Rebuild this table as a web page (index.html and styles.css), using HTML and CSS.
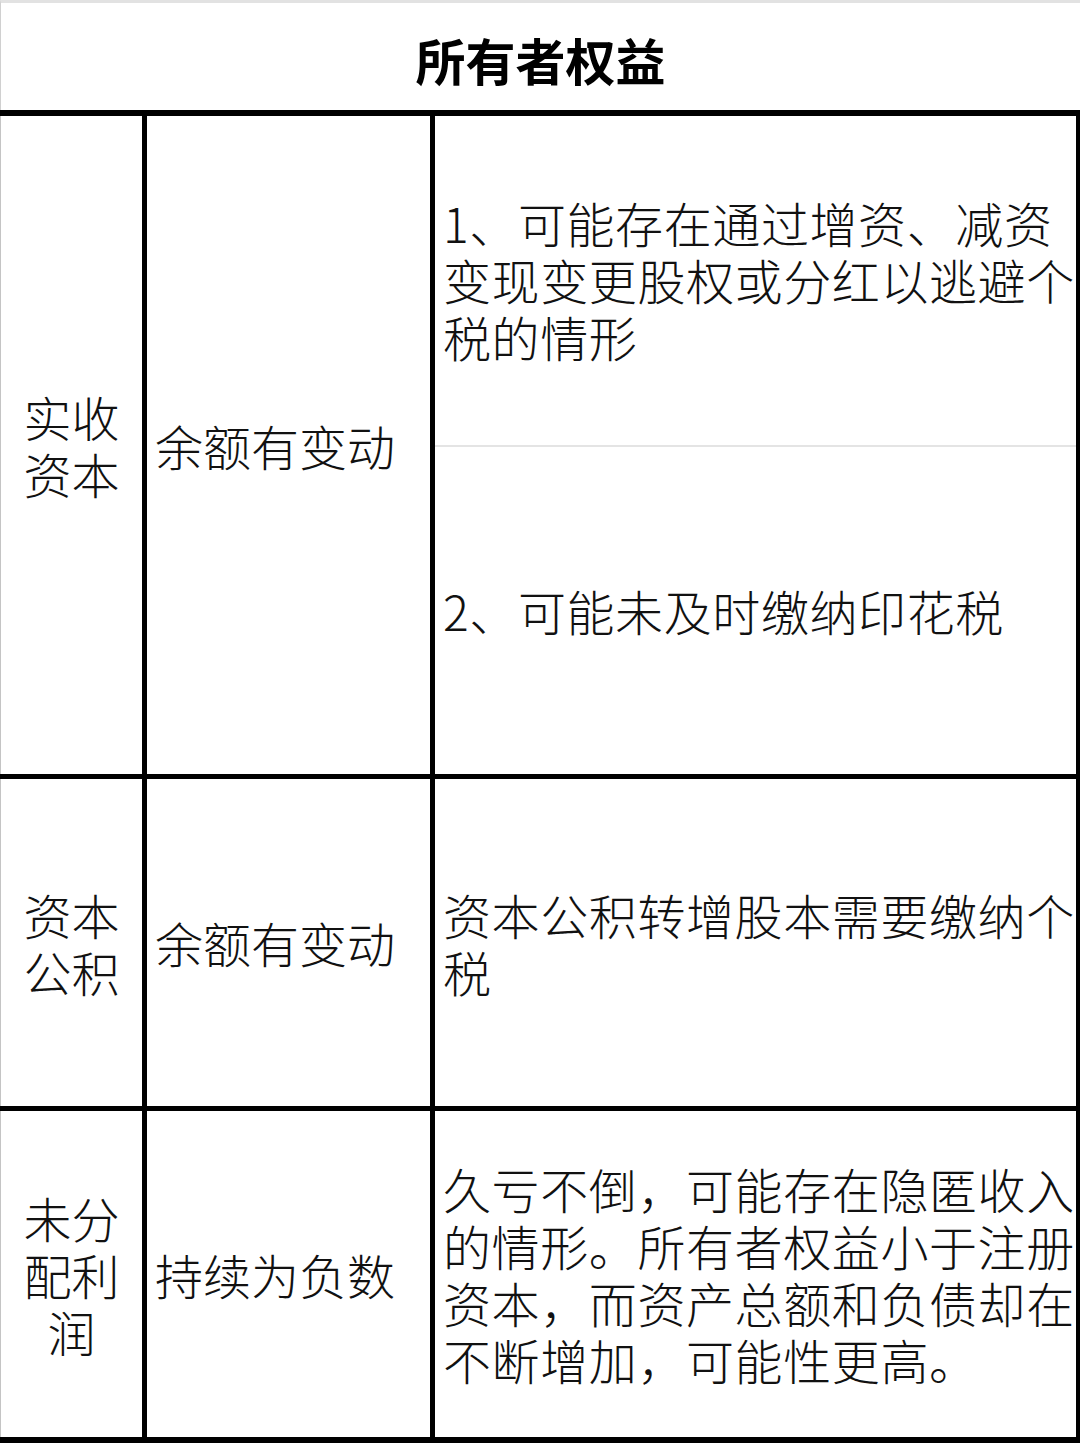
FILE: index.html
```html
<!DOCTYPE html>
<html lang="zh-CN">
<head>
<meta charset="utf-8">
<title>所有者权益</title>
<link rel="stylesheet" href="styles.css">
</head>
<body>
<div class="page">
  <div class="title">所有者权益</div>
  <div class="grid">
    <div class="cell c1"><div class="txt"><span class="ln">实收</span><span class="ln">资本</span></div></div>
    <div class="cell c2">余额有变动</div>
    <div class="split">
      <div class="cell c3 sub top"><div class="txt"><span class="ln">1、可能存在通过增资、减资</span><span class="ln">变现变更股权或分红以逃避个</span><span class="ln">税的情形</span></div></div>
      <div class="cell c3 sub">2、可能未及时缴纳印花税</div>
    </div>

    <div class="cell c1"><div class="txt"><span class="ln">资本</span><span class="ln">公积</span></div></div>
    <div class="cell c2">余额有变动</div>
    <div class="cell c3"><div class="txt"><span class="ln">资本公积转增股本需要缴纳个</span><span class="ln">税</span></div></div>

    <div class="cell c1"><div class="txt"><span class="ln">未分</span><span class="ln">配利</span><span class="ln">润</span></div></div>
    <div class="cell c2">持续为负数</div>
    <div class="cell c3"><div class="txt"><span class="ln">久亏不倒，可能存在隐匿收入</span><span class="ln">的情形。所有者权益小于注册</span><span class="ln">资本，而资产总额和负债却在</span><span class="ln">不断增加，可能性更高。</span></div></div>
  </div>
</div>
</body>
</html>
```

FILE: styles.css
```css
html, body {
  margin: 0;
  padding: 0;
  background: #ffffff;
}

.page {
  width: 1080px;
  height: 1443px;
  overflow: hidden;
  font-family: "Noto Sans CJK SC", "Noto Sans", sans-serif;
  color: #111111;
}

.title {
  box-sizing: border-box;
  height: 110px;
  border-top: 3px solid #e2e2e2;
  border-left: 1px solid #d0d0d0;
  display: flex;
  align-items: center;
  justify-content: center;
  padding-top: 4px;
  font-size: 50px;
  font-weight: 700;
  line-height: 1;
  color: #000000;
}

.grid {
  display: grid;
  grid-template-columns: 142px 283px 641px;
  grid-template-rows: 658px 327px 326px;
  column-gap: 5px;
  row-gap: 5px;
  padding: 6px 4px 6px 0;
  background: #000000;
}

.cell {
  background: #ffffff;
  display: flex;
  align-items: center;
  font-size: 48px;
  font-weight: 300;
  line-height: 57px;
  white-space: nowrap;
  overflow: hidden;
  box-sizing: border-box;
}

.txt {
  display: flex;
  flex-direction: column;
}

.ln {
  display: block;
  height: 57px;
  line-height: 57px;
}

.c1 {
  justify-content: center;
  text-align: center;
  border-left: 1px solid #c4c4c4;
}

.c2 {
  padding-left: 8px;
}

.c3 {
  padding-left: 8px;
  letter-spacing: 0.6px;
}

.split {
  display: flex;
  flex-direction: column;
  background: #ffffff;
}

.sub {
  flex: 1;
}

.sub.top {
  border-bottom: 2px solid #e4e4e4;
  padding-bottom: 2px;
}
```
